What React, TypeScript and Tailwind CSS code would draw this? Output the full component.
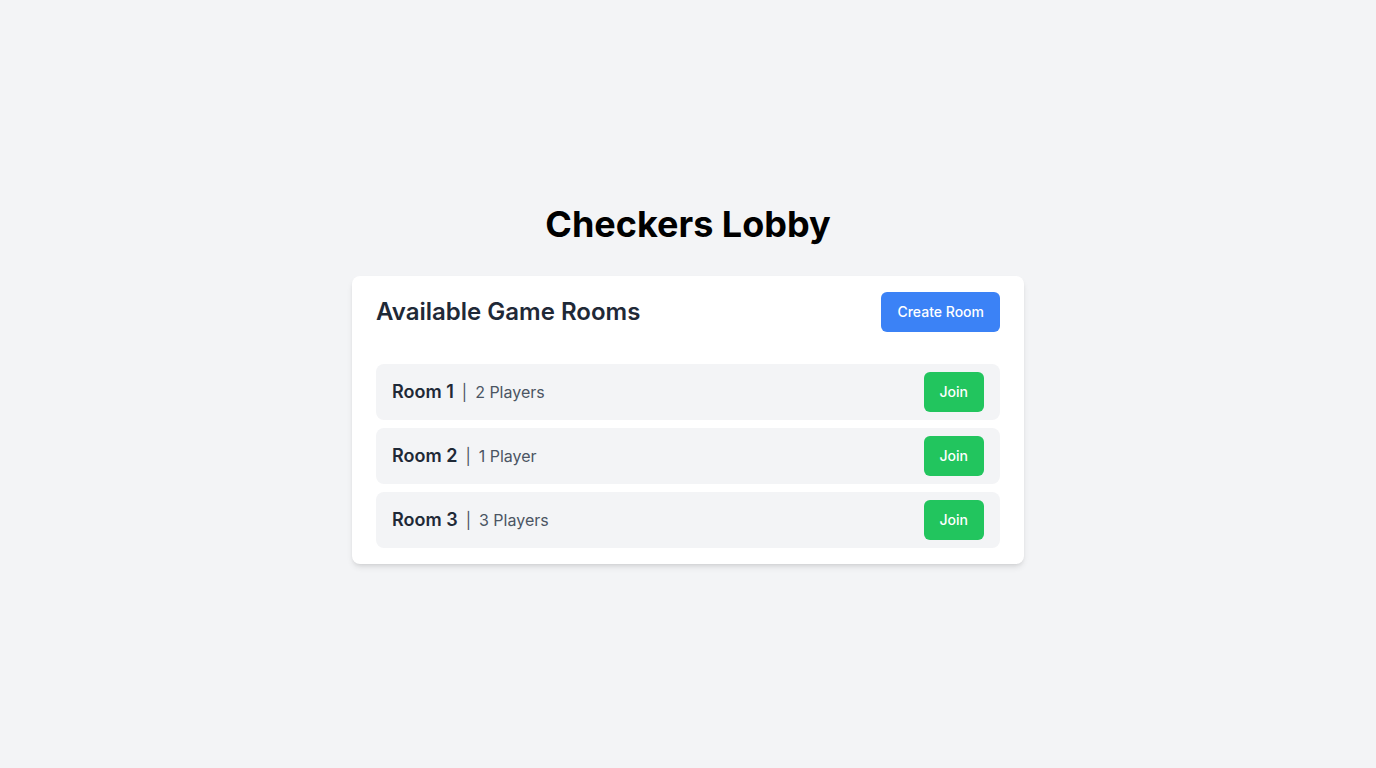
const rooms = [
  { name: "Room 1", players: "2 Players" },
  { name: "Room 2", players: "1 Player" },
  { name: "Room 3", players: "3 Players" },
]

const App = () => {
  return (
    <div
      className="min-h-screen bg-[#f3f4f6] flex flex-col items-center justify-center"
      style={{ fontFamily: "Inter, 'Noto Sans', sans-serif" }}
    >
      <h1 className="text-4xl font-bold text-black mb-8">Checkers Lobby</h1>
      <div className="w-full max-w-2xl bg-white rounded-lg shadow-md px-6 py-4">
        <div className="flex items-center justify-between mb-8">
          <h2 className="text-2xl font-semibold text-[#1f2937]">Available Game Rooms</h2>
          <button className="bg-[#3b82f6] text-white text-sm font-medium px-4 py-2.5 rounded-md">
            Create Room
          </button>
        </div>
        <ul className="flex flex-col gap-2">
          {rooms.map((room) => (
            <li
              key={room.name}
              className="flex items-center justify-between bg-[#f3f4f6] rounded-lg px-4 py-2"
            >
              <div className="flex items-center">
                <span className="text-lg font-semibold text-[#1f2937]">{room.name}</span>
                <span className="mx-2 text-[#4b5563]">|</span>
                <span className="text-base text-[#4b5563]">{room.players}</span>
              </div>
              <button className="bg-[#22c55e] text-white text-sm font-medium px-4 py-2.5 rounded-md">
                Join
              </button>
            </li>
          ))}
        </ul>
      </div>
    </div>
  )
}

export default App
